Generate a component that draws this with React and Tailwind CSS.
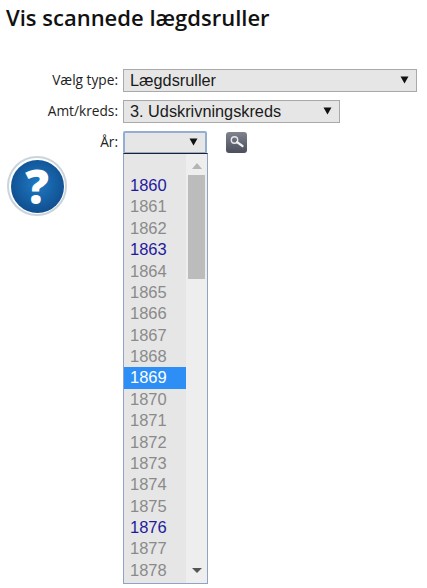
import React from "react";

const years = [
  [1860, 1], [1861], [1862], [1863, 1], [1864], [1865], [1866], [1867], [1868], [1869, 2],
  [1870], [1871], [1872], [1873], [1874], [1875], [1876, 1], [1877], [1878],
];

function Caret({ className = "" }) {
  return (
    <svg width="9" height="8" viewBox="0 0 9 8" className={className}>
      <path d="M0.5 0.5 H8.5 L4.5 7.5 Z" fill="#111" />
    </svg>
  );
}

function Row({ label, width, value, focus, children }) {
  return (
    <div className="flex items-center h-[22px]">
      <div className="w-[118px] text-right text-[13.7px] text-[#222] font-['Open_Sans',sans-serif]">{label}</div>
      <div
        style={{ width }}
        className={
          "ml-[5px] h-[23px] flex items-center justify-between bg-[#e6e6e6] text-[16.3px] text-[#1a1a1a] font-['Liberation_Sans',sans-serif] pl-[6px] " +
          (focus ? "border-2 border-[#94aed3] rounded-[2px] pr-[7px]" : "border border-[#a9a9a9] pr-[7px]")
        }
      >
        <span>{value}</span>
        <Caret />
      </div>
      {children}
    </div>
  );
}

export default function App() {
  return (
    <div className="w-[427px] h-[588px] bg-white overflow-hidden">
      <h1 className="pl-[6px] pt-[2px] text-[22px] leading-[30px] font-semibold text-[#111] font-['Open_Sans',sans-serif]">
        Vis scannede lægdsruller
      </h1>
      <div className="mt-[37px] flex flex-col gap-[9px]">
        <Row label="Vælg type:" width={294} value="Lægdsruller" />
        <Row label="Amt/kreds:" width={217} value="3. Udskrivningskreds" />
        <div className="relative">
          <Row label="År:" width={84} value="" focus>
            <div className="ml-[19px] w-[21px] h-[21px] rounded-[3px] bg-gradient-to-b from-[#80848f] to-[#4b4e5b] flex items-center justify-center">
              <svg width="16" height="14" viewBox="0 0 16 14">
                <circle cx="5.5" cy="5" r="3.2" fill="none" stroke="#e8e8ec" strokeWidth="1.4" />
                <path d="M8 7.2 L13.5 11" stroke="#f2f2f2" strokeWidth="2.2" strokeLinecap="round" />
              </svg>
            </div>
          </Row>
          <div className="absolute left-[123px] top-[22px] w-[85px] h-[431px] border border-[#8fa3c4] border-t-[#222] bg-[#eeeeef] flex">
            <div className="w-[62px] h-full bg-[#e6e6e6] pt-[21px] font-['Liberation_Sans',sans-serif] text-[16.5px] leading-[21.39px]">
              {years.map(([y, k]) => (
                <div
                  key={y}
                  className={
                    "pl-[6px] h-[21.39px] " +
                    (k === 1 ? "text-[#1f1a9c]" : k === 2 ? "bg-[#2d8ff5] text-white" : "text-[#8a8a8a]")
                  }
                >
                  {y}
                </div>
              ))}
            </div>
            <div className="flex-1 flex flex-col items-center relative">
              <svg width="10" height="6" viewBox="0 0 10 6" className="mt-[9px]">
                <path d="M0 6 L5 0 L10 6 Z" fill="#b5b5b5" />
              </svg>
              <div className="mt-[6px] w-[17px] h-[104px] bg-[#bdbcbd]" />
              <svg width="10" height="5" viewBox="0 0 10 5" className="absolute bottom-[10px]">
                <path d="M0 0 H10 L5 5 Z" fill="#555" />
              </svg>
            </div>
          </div>
        </div>
      </div>
      <div className="mt-[3px] ml-[7px] w-[60px] h-[60px] rounded-full bg-white border-2 border-[#c9d4db] flex items-center justify-center">
        <div className="w-[53px] h-[53px] rounded-full bg-[radial-gradient(circle_at_50%_45%,#1f7ac4,#0a3f7d)] flex items-center justify-center">
          <span className="text-white text-[47px] leading-none font-extrabold font-['Open_Sans',sans-serif]">?</span>
        </div>
      </div>
    </div>
  );
}
